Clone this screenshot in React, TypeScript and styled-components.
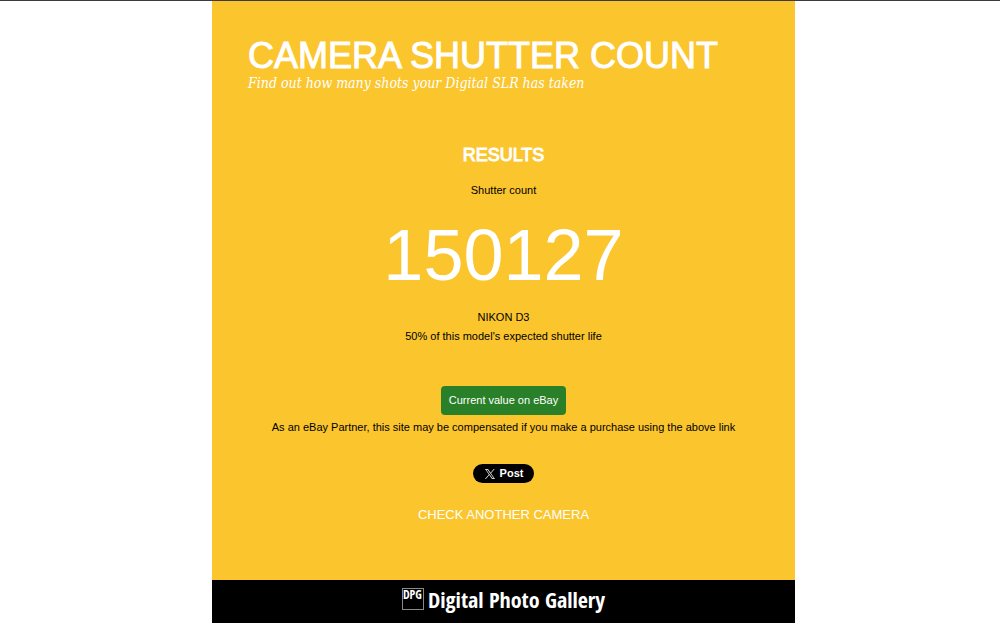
import React from "react";
import styled, { createGlobalStyle } from "styled-components";

const GlobalStyle = createGlobalStyle`
  *, *::before, *::after { box-sizing: border-box; }
  body {
    margin: 0;
    background: #fff;
    color: #000;
    font: 11px/19px "Liberation Sans", Helvetica, Arial, sans-serif;
  }
`;

const Page = styled.div`
  border-top: 1px solid #3b3b3d;
  padding-left: 7px;
`;

const Column = styled.div`
  max-width: 583px;
  margin: 0 auto;
  background: #fbc52e;
`;

const Header = styled.header`
  padding: 36px 36px 0;
  color: #fff;
`;

const Title = styled.h1`
  margin: 0;
  font-size: 36px;
  line-height: 38px;
  font-weight: 400;
  -webkit-text-stroke: 1px currentColor;
`;

const Tagline = styled.p`
  margin: 0;
  font: italic 14px/16px "DejaVu Serif Condensed", "DejaVu Serif", Georgia, serif;
`;

const Results = styled.main`
  display: flex;
  flex-direction: column;
  align-items: center;
  padding: 54px 36px 55px;
  text-align: center;
`;

const ResultsTitle = styled.h2`
  margin: 0 0 16px;
  color: #fff;
  font-size: 18px;
  line-height: 20px;
  font-weight: 400;
  -webkit-text-stroke: 1px currentColor;
`;

const Line = styled.p`
  margin: 0;
`;

const Count = styled.strong`
  margin: 17px 0 15px;
  color: #fff;
  font-size: 72px;
  line-height: 76px;
  font-weight: 400;
`;

const ValueButton = styled.a`
  margin: 40px 0 3px;
  padding: 5px 8px;
  border-radius: 4px;
  background: #298029;
  color: #fff;
  text-decoration: none;
`;

const PostButton = styled.a`
  display: flex;
  align-items: center;
  gap: 5px;
  margin: 27px 0 22px;
  padding: 0 11px 0 12px;
  border-radius: 10px;
  background: #000;
  color: #fff;
  font-weight: 700;
  text-decoration: none;
`;

const AgainLink = styled.a`
  color: #fff;
  font-size: 13px;
  line-height: 20px;
  text-decoration: none;
`;

const Footer = styled.footer`
  display: flex;
  justify-content: center;
  padding: 1px 0 6px;
  background: #000;
`;

const Brand = styled.a`
  display: flex;
  align-items: center;
  gap: 4px;
  color: #fff;
  font-family: "Noto Sans ExtraCondensed", "Open Sans Condensed", "Roboto Condensed", Roboto, sans-serif;
  font-size: 22px;
  line-height: 36px;
  font-weight: 500;
  text-decoration: none;
`;

const BrandMark = styled.span`
  width: 22px;
  height: 22px;
  border: 1px solid #8a8a8a;
  font-size: 12px;
  line-height: 12px;
`;

const XLogo = () => (
  <svg width="10" height="10" viewBox="0 0 24 24" fill="#fff" aria-hidden="true">
    <path d="M14.258 10.152 23.176 0h-2.113l-7.747 8.813L7.133 0H0l9.352 13.328L0 23.973h2.113l8.176-9.309 6.531 9.309h7.133l-9.695-13.821Zm-2.895 3.293-.949-1.328L2.875 1.56h3.246l6.086 8.523.945 1.328 7.91 11.078h-3.246l-6.453-9.044Z" />
  </svg>
);

export default function App() {
  return (
    <>
      <GlobalStyle />
      <Page>
        <Column>
          <Header>
            <Title>CAMERA SHUTTER COUNT</Title>
            <Tagline>Find out how many shots your Digital SLR has taken</Tagline>
          </Header>
          <Results>
            <ResultsTitle>RESULTS</ResultsTitle>
            <Line>Shutter count</Line>
            <Count>150127</Count>
            <Line>NIKON D3</Line>
            <Line>50% of this model's expected shutter life</Line>
            <ValueButton href="#value">Current value on eBay</ValueButton>
            <Line>As an eBay Partner, this site may be compensated if you make a purchase using the above link</Line>
            <PostButton href="#post">
              <XLogo />
              Post
            </PostButton>
            <AgainLink href="#check">CHECK ANOTHER CAMERA</AgainLink>
          </Results>
          <Footer>
            <Brand href="#gallery">
              <BrandMark>DPG</BrandMark>
              Digital Photo Gallery
            </Brand>
          </Footer>
        </Column>
      </Page>
    </>
  );
}
